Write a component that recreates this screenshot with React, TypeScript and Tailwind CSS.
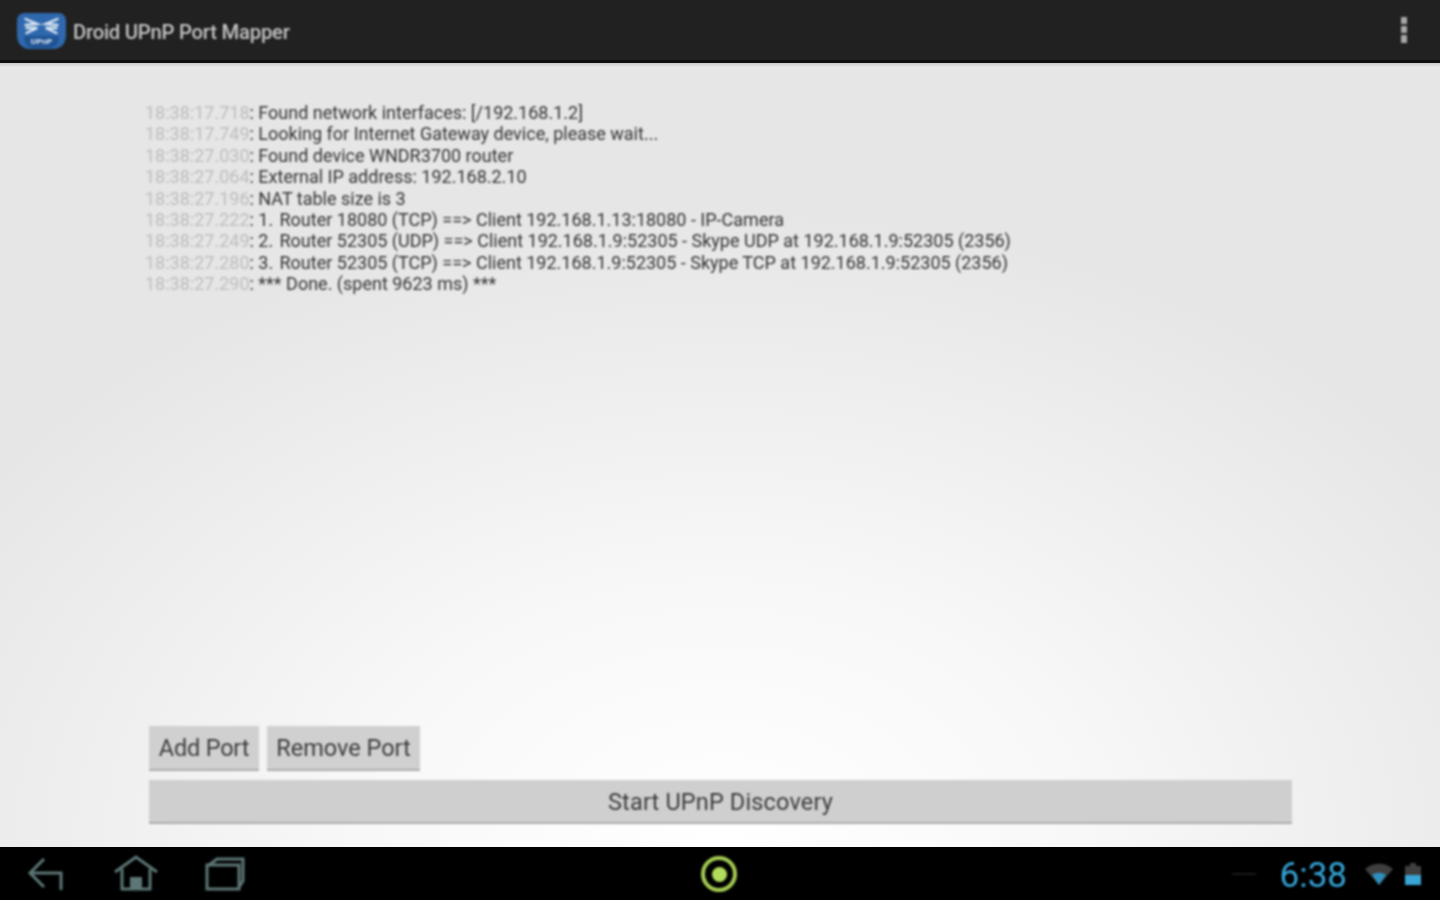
const logs: [string, string][] = [
  ["18:38:17.718", "Found network interfaces: [/192.168.1.2]"],
  ["18:38:17.749", "Looking for Internet Gateway device, please wait..."],
  ["18:38:27.030", "Found device WNDR3700 router"],
  ["18:38:27.064", "External IP address: 192.168.2.10"],
  ["18:38:27.196", "NAT table size is 3"],
  ["18:38:27.222", "1. \u200ARouter 18080 (TCP) ==> Client 192.168.1.13:18080 - IP-Camera"],
  ["18:38:27.249", "2. \u200ARouter 52305 (UDP) ==> Client 192.168.1.9:52305 - Skype UDP at 192.168.1.9:52305 (2356)"],
  ["18:38:27.280", "3. \u200ARouter 52305 (TCP) ==> Client 192.168.1.9:52305 - Skype TCP at 192.168.1.9:52305 (2356)"],
  ["18:38:27.290", "*** Done. (spent 9623 ms) ***"],
];

function Logo() {
  return (
    <svg width="49" height="36" viewBox="2 1 46 36" preserveAspectRatio="none" className="shrink-0 mt-[1px] blur-[0.8px]">
      <path d="M9 1H41C45 1 48 4 48 9V23C48 31 44 36 37 37H13C6 36 2 31 2 23V9C2 4 5 1 9 1Z" fill="#2f68ad" />
      <path d="M9 24H41V27C41 32 38 35 34 36H16C12 35 9 32 9 27Z" fill="#1f5393" />
      <g stroke="#dbe6f2" strokeWidth="2.4" fill="none" strokeLinecap="round">
        <path d="M10 7L21 12L10 13" />
        <path d="M40 7L29 12L40 13" />
        <path d="M11 21L21 16H11" />
        <path d="M39 21L29 16H39" />
      </g>
      <text x="25" y="32.5" textAnchor="middle" fontSize="8" fontWeight="700" fill="#dbe6f2" fontFamily="Roboto, sans-serif">UPnP</text>
    </svg>
  );
}

export default function App() {
  return (
    <div className="w-[1440px] h-[900px] flex flex-col overflow-hidden font-['Roboto',sans-serif]">
      <header className="h-[63px] shrink-0 bg-[#212121] border-b-[3px] border-b-[#0d0d0d] flex items-center pl-[17px] pr-[33px]">
        <Logo />
        <span className="ml-[7px] pt-[5px] text-[20.3px] font-medium tracking-[-0.25px] text-[#c4c4c4] blur-[0.8px]">Droid UPnP Port Mapper</span>
        <div className="ml-auto flex flex-col gap-[2px] blur-[0.8px]">
          <div className="w-[6px] h-[7px] bg-[#a8a8a8]" />
          <div className="w-[6px] h-[7px] bg-[#a8a8a8]" />
          <div className="w-[6px] h-[8px] bg-[#a8a8a8]" />
        </div>
      </header>

      <main className="flex-1 flex flex-col pl-[145px] pr-[148px] pt-[39px] pb-[23px] bg-[linear-gradient(to_bottom,#c8c8c8_0px,#e6e6e6_4px,transparent_5px),radial-gradient(ellipse_900px_640px_at_50%_100%,#ffffff_0%,#f8f8f8_40%,#e6e6e6_100%)]">
        <div className="flex-1 text-[18px] leading-[21.4px] whitespace-pre text-[#333333] blur-[0.8px]">
          {logs.map(([time, msg]) => (
            <div key={time}>
              <span className="text-[#bdbdbd]">{time}</span>
              <span>: {msg}</span>
            </div>
          ))}
        </div>
        <div className="flex flex-col gap-[9px] pl-[4px] text-[#3c3c3c] text-[23.5px]">
          <div className="flex gap-[8px]">
            <button className="h-[45px] w-[110px] bg-[#d0d0d0] border-b-2 border-b-[#adadad] flex items-center justify-center pt-[2px] tracking-[-0.2px] blur-[0.8px]">Add Port</button>
            <button className="h-[45px] w-[153px] bg-[#d0d0d0] border-b-2 border-b-[#adadad] flex items-center justify-center pt-[2px] blur-[0.8px]">Remove Port</button>
          </div>
          <button className="h-[44px] w-[1143px] bg-[#cfcfcf] border-b-2 border-b-[#adadad] flex items-center justify-center pt-[4px] tracking-[0.15px] blur-[0.8px]">Start UPnP Discovery</button>
        </div>
      </main>

      <footer className="h-[53px] shrink-0 bg-black flex items-center relative">
        <div className="flex items-center pl-[27px] gap-[48px] blur-[0.8px]">
          <svg width="38" height="36" viewBox="0 0 38 36" fill="none" stroke="#5d7676" strokeWidth="3">
            <path d="M17 3L3 17L17 31" />
            <path d="M3 17H34V34" />
          </svg>
          <svg width="46" height="38" viewBox="0 0 46 38" fill="none" stroke="#5d7676" strokeWidth="3">
            <path d="M2 17L23 2L44 17" />
            <path d="M9 14V34H37V14" />
            <rect x="17" y="22" width="12" height="12" fill="#5d7676" stroke="none" />
          </svg>
          <svg width="40" height="34" viewBox="0 0 40 34" fill="none" stroke="#5d7676" strokeWidth="3" className="-ml-[2px]">
            <rect x="2" y="8" width="32" height="24" />
            <path d="M4 8L12 2H38V24L34 30" />
          </svg>
        </div>
        <div className="absolute left-[701px] top-[9px] w-[36px] h-[36px] rounded-full border-[4px] border-[#a4cc52] flex items-center justify-center blur-[0.8px]">
          <div className="w-[15px] h-[15px] rounded-full bg-[#b2dc5c]" />
        </div>
        <div className="ml-auto flex items-center pr-[19px] blur-[0.8px]">
          <div className="w-[24px] h-[2px] bg-[#1a1a1a] mr-[24px]" />
          <span className="text-[35px] leading-none text-[#35a5d8] mr-[17px] pt-[3px]">6:38</span>
          <svg width="30" height="22" viewBox="0 0 30 22" className="mr-[11px]">
            <path d="M1 6C9 -1 21 -1 29 6L15 22Z" fill="#3f3f3f" />
            <path d="M8 12C12 9 18 9 22 12L15 22Z" fill="#2f90c0" />
          </svg>
          <div className="flex flex-col items-center">
            <div className="w-[6px] h-[3px] bg-[#3f3f3f]" />
            <div className="w-[16px] h-[9px] bg-[#3f3f3f]" />
            <div className="w-[16px] h-[10px] bg-[#3aa6d6]" />
          </div>
        </div>
      </footer>
    </div>
  );
}
